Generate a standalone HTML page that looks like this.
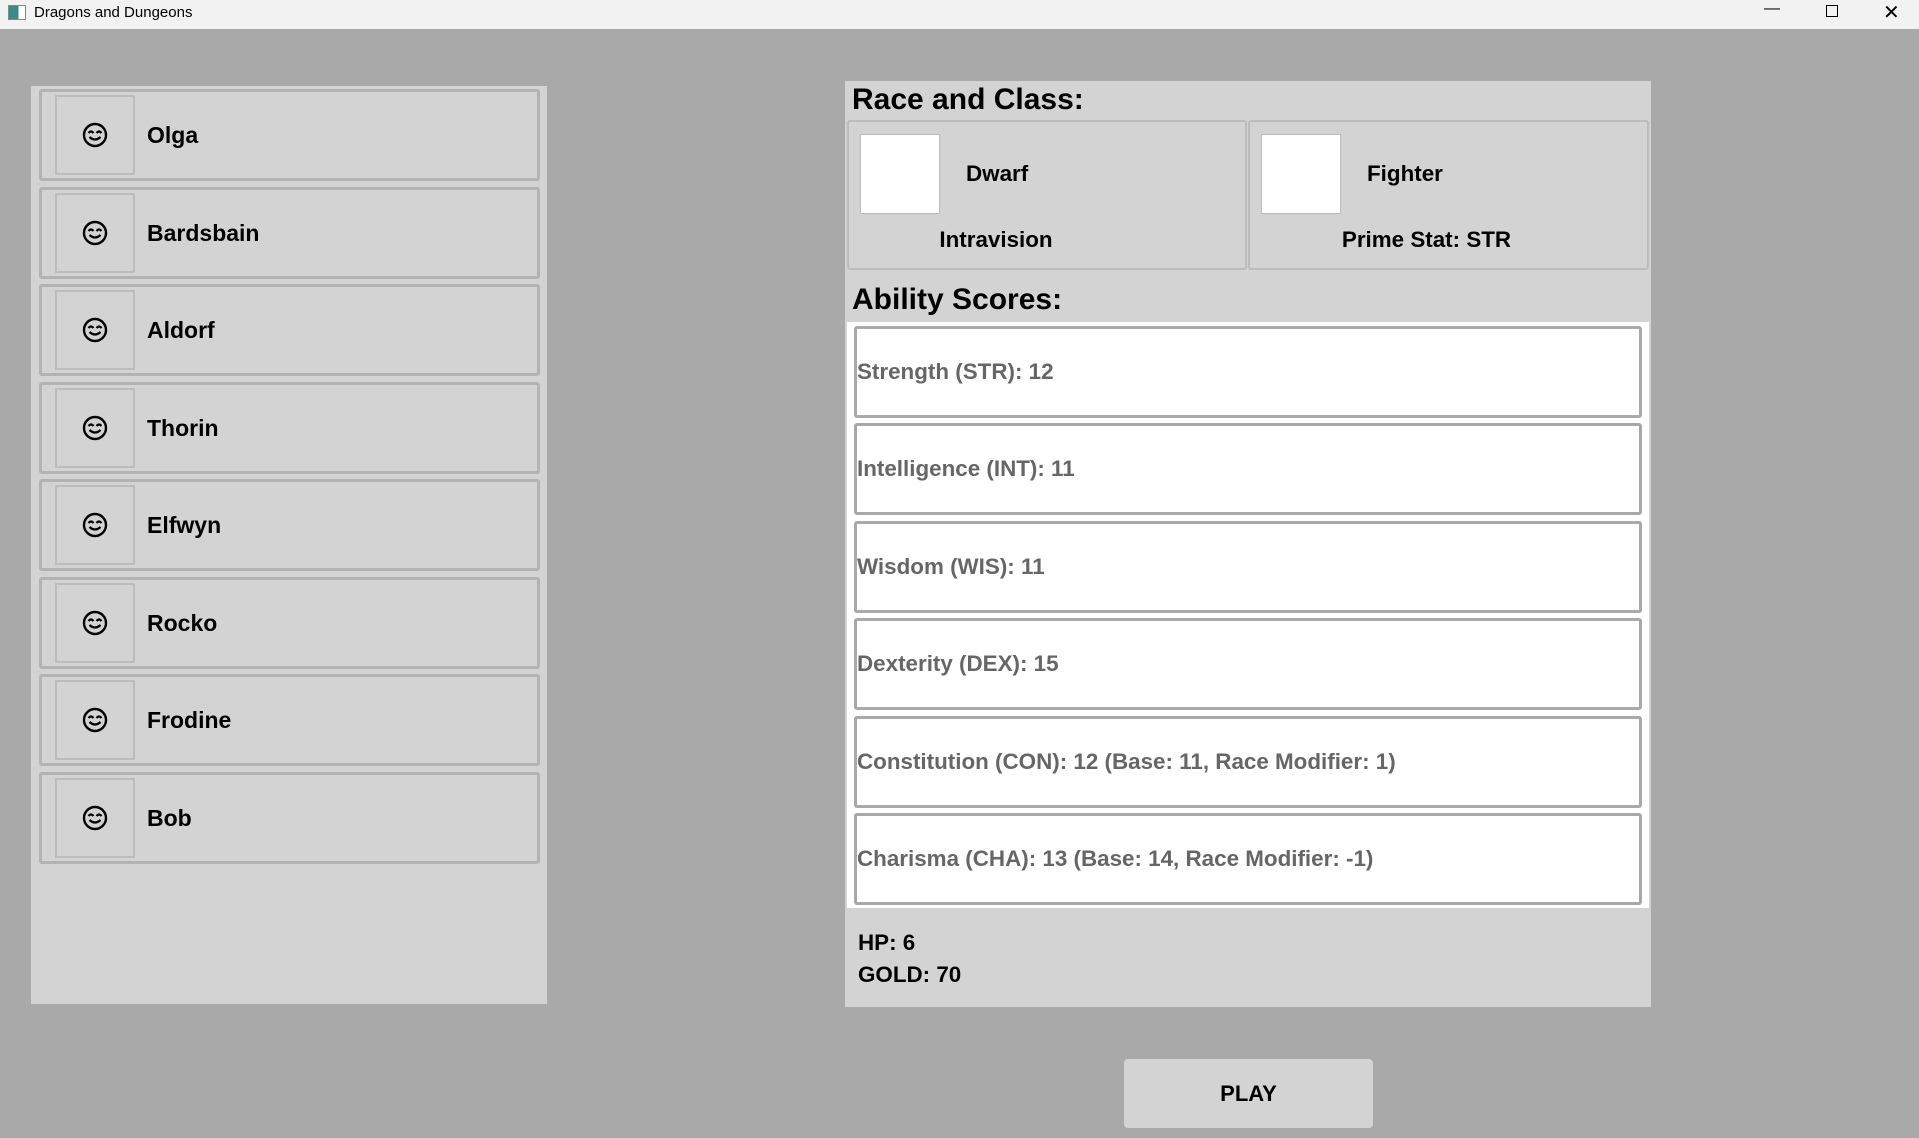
<!DOCTYPE html>
<html><head><style>
body{margin:0;width:1919px;height:1138px;background:#a9a9a9;font-family:"Liberation Sans",Arial,sans-serif;position:relative;overflow:hidden}
.abs{position:absolute;box-sizing:border-box}
.title{left:0;top:0;width:1919px;height:29px;background:#f2f2f2;font-size:15px;color:#000}
.panel{background:#d3d3d3}
.item{left:39px;width:501px;height:92px;border:3px solid #b3b3b3;border-radius:3px;background:#d3d3d3}
.ib{left:13px;top:3px;width:80px;height:80px;border:2px solid #bcbcbc;display:flex;align-items:center;justify-content:center}
.nm{left:105px;top:0;height:86px;line-height:86px;font-size:23px;font-weight:bold;color:#000}
.stat{left:854px;width:788px;height:92px;border:3px solid #a9a9a9;border-radius:3px;background:#fff;font-size:22.4px;font-weight:bold;color:#666;line-height:86px;padding-left:0}
.h{font-size:30px;font-weight:bold;color:#000}
</style></head><body>
<div class="abs title"><div class="abs" style="left:8px;top:5px;width:18px;height:15px;border:1px solid #888;background:linear-gradient(90deg,#3a8a8a 60%,#fff 60%)"></div><span class="abs" style="left:34px;top:4px">Dragons and Dungeons</span>
<span class="abs" style="left:1764px;top:0;font-size:16px">—</span>
<div class="abs" style="left:1826px;top:5px;width:12px;height:12px;border:1.5px solid #000"></div>
<span class="abs" style="left:1883px;top:0;font-size:20px">✕</span></div>

<div class="abs panel" style="left:31px;top:86px;width:516px;height:918px"></div>
<div id="items"></div>

<div class="abs panel" style="left:845px;top:81px;width:806px;height:926px"></div>
<div class="abs h" style="left:852px;top:81px;line-height:38px">Race and Class:</div>
<div class="abs" style="left:847px;top:120px;width:400px;height:150px;border:2px solid #bcbcbc;border-radius:3px"></div>
<div class="abs" style="left:1248px;top:120px;width:401px;height:150px;border:2px solid #bcbcbc;border-radius:3px"></div>
<div class="abs" style="left:860px;top:134px;width:80px;height:80px;background:#fff;border:1px solid #bbb"></div>
<div class="abs" style="left:1261px;top:134px;width:80px;height:80px;background:#fff;border:1px solid #bbb"></div>
<div class="abs" style="left:966px;top:161px;font-size:22.4px;font-weight:bold">Dwarf</div>
<div class="abs" style="left:1367px;top:161px;font-size:22.4px;font-weight:bold">Fighter</div>
<div class="abs" style="left:796px;top:227px;width:400px;text-align:center;font-size:22.4px;font-weight:bold">Intravision</div>
<div class="abs" style="left:1226px;top:227px;width:401px;text-align:center;font-size:22.4px;font-weight:bold">Prime Stat: STR</div>
<div class="abs h" style="left:852px;top:280px;line-height:40px">Ability Scores:</div>
<div class="abs" style="left:847px;top:322px;width:802px;height:586px;background:#fff"></div>
<div class="abs stat" style="top:326px">Strength (STR): 12</div>
<div class="abs stat" style="top:423px">Intelligence (INT): 11</div>
<div class="abs stat" style="top:521px">Wisdom (WIS): 11</div>
<div class="abs stat" style="top:618px">Dexterity (DEX): 15</div>
<div class="abs stat" style="top:716px">Constitution (CON): 12 (Base: 11, Race Modifier: 1)</div>
<div class="abs stat" style="top:813px">Charisma (CHA): 13 (Base: 14, Race Modifier: -1)</div>
<div class="abs" style="left:858px;top:927px;font-size:22.4px;font-weight:bold;line-height:32px">HP: 6<br>GOLD: 70</div>
<div class="abs" style="left:1124px;top:1059px;width:249px;height:69px;background:#d3d3d3;border-radius:4px;text-align:center;line-height:69px;font-size:22px;font-weight:bold">PLAY</div>
<script>
var n=["Olga","Bardsbain","Aldorf","Thorin","Elfwyn","Rocko","Frodine","Bob"],h="";
var face='<svg width="26" height="26" viewBox="0 0 26 26"><circle cx="13" cy="13" r="11" fill="none" stroke="#000" stroke-width="2.4"/><path d="M6.5 11q2.5-3 5 0M14.5 11q2.5-3 5 0M7.5 15q5.5 5 11 0" fill="none" stroke="#000" stroke-width="2.2"/></svg>';
for(var i=0;i<8;i++){h+='<div class="abs item" style="top:'+(89+i*97.5)+'px"><div class="abs ib">'+face+'</div><div class="abs nm">'+n[i]+'</div></div>';}
document.getElementById("items").innerHTML=h;
</script>
</body></html>
